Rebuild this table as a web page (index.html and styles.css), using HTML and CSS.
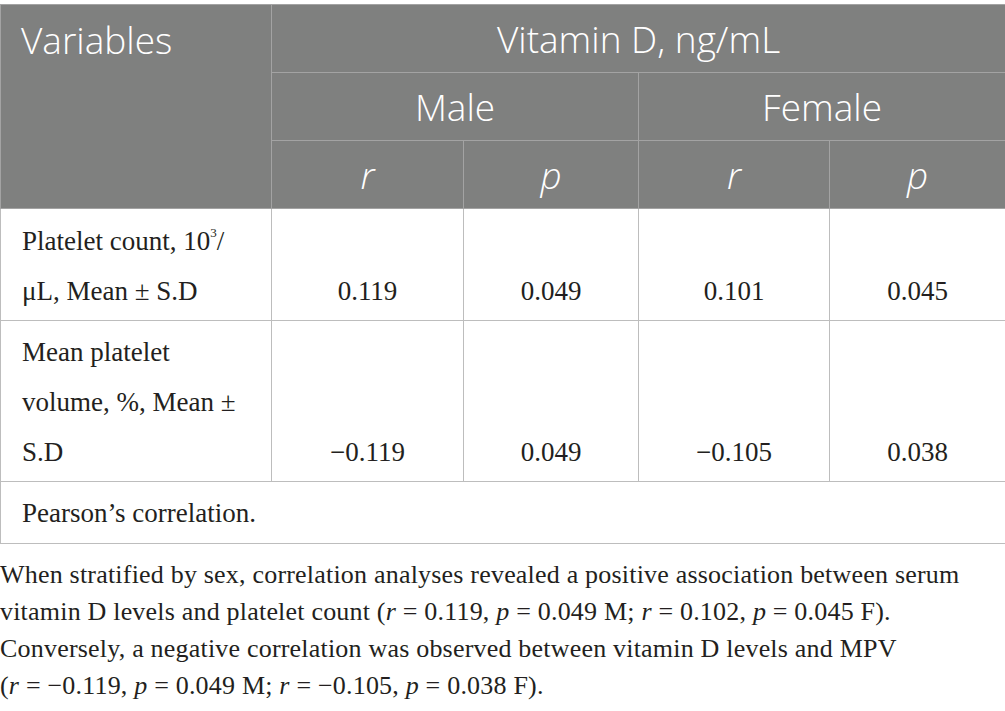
FILE: index.html
```html
<!DOCTYPE html>
<html lang="en">
<head>
<meta charset="utf-8">
<title>Vitamin D correlation table</title>
<link rel="stylesheet" href="styles.css">
</head>
<body>
<div class="page">
  <table class="data">
    <colgroup>
      <col class="c-var">
      <col class="c-mr">
      <col class="c-mp">
      <col class="c-fr">
      <col class="c-fp">
    </colgroup>
    <thead>
      <tr>
        <th class="left" rowspan="3">Variables</th>
        <th colspan="4">Vitamin D, ng/mL</th>
      </tr>
      <tr>
        <th colspan="2">Male</th>
        <th colspan="2">Female</th>
      </tr>
      <tr>
        <th><i>r</i></th>
        <th><i>p</i></th>
        <th><i>r</i></th>
        <th><i>p</i></th>
      </tr>
    </thead>
    <tbody>
      <tr>
        <td class="left">Platelet count, 10<sup>3</sup>/<br>μL, Mean ± S.D</td>
        <td>0.119</td>
        <td>0.049</td>
        <td>0.101</td>
        <td>0.045</td>
      </tr>
      <tr>
        <td class="left">Mean platelet<br>volume, %, Mean ±<br>S.D</td>
        <td>−0.119</td>
        <td>0.049</td>
        <td>−0.105</td>
        <td>0.038</td>
      </tr>
    </tbody>
    <tfoot>
      <tr>
        <td class="left" colspan="5">Pearson’s correlation.</td>
      </tr>
    </tfoot>
  </table>
  <p class="text">When stratified by sex, correlation analyses revealed a positive association between serum<br>vitamin D levels and platelet count (<i>r</i> = 0.119, <i>p</i> = 0.049 M; <i>r</i> = 0.102, <i>p</i> = 0.045 F).<br>Conversely, a negative correlation was observed between vitamin D levels and MPV<br>(<i>r</i> = −0.119, <i>p</i> = 0.049 M; <i>r</i> = −0.105, <i>p</i> = 0.038 F).</p>
</div>
</body>
</html>
```
FILE: styles.css
```css
html, body {
  margin: 0;
  padding: 0;
  background: #ffffff;
}

.page {
  padding-top: 4px;
  width: 1005px;
}

.data {
  border-collapse: collapse;
  table-layout: fixed;
  width: 1005px;
  color: #231f20;
}

.c-var { width: 271px; }
.c-mr { width: 192px; }
.c-mp { width: 175px; }
.c-fr { width: 191px; }
.c-fp { width: 176px; }

.data th {
  background: #7f807f;
  color: #ffffff;
  font-family: "Open Sans", "Noto Sans", sans-serif;
  font-weight: 300;
  font-size: 37px;
  line-height: 40px;
  height: 68px;
  padding: 0 12px;
  text-align: center;
  vertical-align: middle;
  border: 1px solid #a3a3a3;
  box-sizing: border-box;
}

.data th.left {
  text-align: left;
  vertical-align: top;
  padding: 15px 20px 0;
}

.data th i {
  font-style: italic;
}

.data td {
  font-family: "Liberation Serif", "Times New Roman", serif;
  font-size: 27px;
  line-height: 50px;
  padding: 6px 12px 4px;
  text-align: center;
  vertical-align: bottom;
  border: 1px solid #bdbdbd;
}

.data tbody tr:first-child td {
  padding-top: 7px;
}

.data tfoot td {
  padding-bottom: 5px;
}

.data td.left {
  text-align: left;
  padding-left: 21px;
}

.data sup {
  font-size: 13px;
  line-height: 0;
  vertical-align: 13px;
}

.text {
  margin: 12px 0 0;
  font-family: "Liberation Serif", "Times New Roman", serif;
  font-size: 26px;
  letter-spacing: 0.2px;
  line-height: 37px;
  white-space: nowrap;
  color: #231f20;
}
```
